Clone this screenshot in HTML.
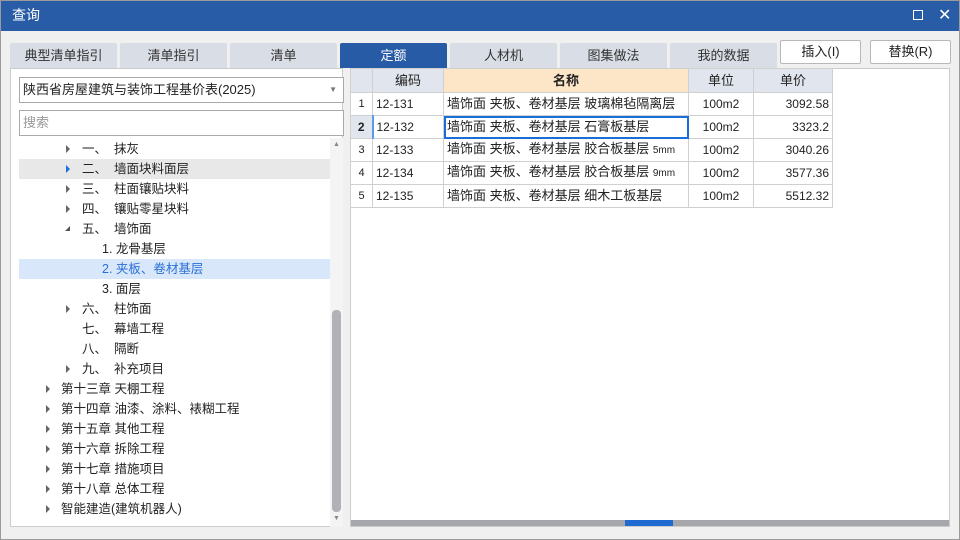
<!DOCTYPE html><html><head><meta charset="utf-8"><style>
*{box-sizing:border-box;margin:0;padding:0}
body{width:960px;height:540px;background:#f0f0f0;font-family:"Liberation Sans","Noto Sans CJK SC",sans-serif;font-size:12px;color:#222;position:relative;overflow:hidden}
.a{position:absolute}
.title{left:0;top:0;width:960px;height:31px;background:#285ca6;color:#fff;font-size:14px;line-height:31px;padding-left:12px}
.tab{top:43px;height:25px;width:107px;background:#d8dde6;border-radius:2px 2px 0 0;text-align:center;line-height:25px;font-size:13px;color:#333}
.tab.on{background:#275ba6;color:#fff}
.btn{top:40px;height:24px;width:81px;background:#fff;border:1px solid #b8b8b8;border-radius:2px;text-align:center;line-height:22px;font-size:13px}
.left{left:10px;top:68px;width:333px;height:459px;background:#fff;border:1px solid #ccc}
.inp{left:19px;width:325px;height:26px;border:1px solid #aaa;background:#fff;line-height:24px;padding-left:3px;font-size:13px}
.row{left:19px;width:311px;height:20px;line-height:20px;font-size:12.5px}
.tri{position:absolute;width:0;height:0;border-top:4px solid transparent;border-bottom:4px solid transparent;border-left:4px solid #666;top:6px}
table{border-collapse:collapse;position:absolute;left:350px;top:68px;font-size:12px;table-layout:fixed}
td{border:1px solid #d0d0d0;height:23px;line-height:20px;padding:0 3px;white-space:nowrap;overflow:hidden}
th{border:1px solid #d0d0d0;height:24px;line-height:20px;background:#e1e6ee;font-weight:normal;font-size:13px}
</style></head><body>
<div class="a title">查询</div>
<div class="a" style="left:913px;top:10px;width:10px;height:10px;border:1px solid #fff"></div>
<div class="a" style="left:938px;top:5px;color:#fff;font-size:16px">✕</div>
<div class="a tab" style="left:10px">典型清单指引</div>
<div class="a tab" style="left:120px">清单指引</div>
<div class="a tab" style="left:230px">清单</div>
<div class="a tab on" style="left:340px">定额</div>
<div class="a tab" style="left:450px">人材机</div>
<div class="a tab" style="left:560px">图集做法</div>
<div class="a tab" style="left:670px">我的数据</div>
<div class="a btn" style="left:780px">插入(I)</div>
<div class="a btn" style="left:870px">替换(R)</div>
<div class="a left"></div>
<div class="a inp" style="top:77px">陕西省房屋建筑与装饰工程基价表(2025)<span style="position:absolute;right:6px;top:0;color:#777;font-size:8px">▼</span></div>
<div class="a inp" style="top:110px;color:#999">搜索</div>
<div class="a" style="left:330px;top:138px;width:13px;height:389px;background:#f4f4f4"></div>
<div class="a" style="left:332px;top:310px;width:9px;height:202px;background:#b0b2b6;border-radius:4px"></div>
<div class="a" style="left:333px;top:141px;color:#888;font-size:7px">▲</div>
<div class="a" style="left:333px;top:515px;color:#888;font-size:7px">▼</div>
<div class="a row" style="top:139px"><i class="tri" style="left:47px"></i><span style="position:absolute;left:63px">一、&nbsp; 抹灰</span></div>
<div class="a row" style="top:159px;background:#e8e8e8"><i class="tri" style="left:47px;border-left-color:#1a6fe0"></i><span style="position:absolute;left:63px">二、&nbsp; 墙面块料面层</span></div>
<div class="a row" style="top:179px"><i class="tri" style="left:47px"></i><span style="position:absolute;left:63px">三、&nbsp; 柱面镶贴块料</span></div>
<div class="a row" style="top:199px"><i class="tri" style="left:47px"></i><span style="position:absolute;left:63px">四、&nbsp; 镶贴零星块料</span></div>
<div class="a row" style="top:219px"><i class="a" style="left:46px;top:7px;width:0;height:0;border-left:5px solid transparent;border-bottom:5px solid #555"></i><span style="position:absolute;left:63px">五、&nbsp; 墙饰面</span></div>
<div class="a row" style="top:239px"><span style="position:absolute;left:83px">1. 龙骨基层</span></div>
<div class="a row" style="top:259px;background:#d9e7fb;color:#2a6fd6"><span style="position:absolute;left:83px">2. 夹板、卷材基层</span></div>
<div class="a row" style="top:279px"><span style="position:absolute;left:83px">3. 面层</span></div>
<div class="a row" style="top:299px"><i class="tri" style="left:47px"></i><span style="position:absolute;left:63px">六、&nbsp; 柱饰面</span></div>
<div class="a row" style="top:319px"><span style="position:absolute;left:63px">七、&nbsp; 幕墙工程</span></div>
<div class="a row" style="top:339px"><span style="position:absolute;left:63px">八、&nbsp; 隔断</span></div>
<div class="a row" style="top:359px"><i class="tri" style="left:47px"></i><span style="position:absolute;left:63px">九、&nbsp; 补充项目</span></div>
<div class="a row" style="top:379px"><i class="tri" style="left:27px"></i><span style="position:absolute;left:42px">第十三章 天棚工程</span></div>
<div class="a row" style="top:399px"><i class="tri" style="left:27px"></i><span style="position:absolute;left:42px">第十四章 油漆、涂料、裱糊工程</span></div>
<div class="a row" style="top:419px"><i class="tri" style="left:27px"></i><span style="position:absolute;left:42px">第十五章 其他工程</span></div>
<div class="a row" style="top:439px"><i class="tri" style="left:27px"></i><span style="position:absolute;left:42px">第十六章 拆除工程</span></div>
<div class="a row" style="top:459px"><i class="tri" style="left:27px"></i><span style="position:absolute;left:42px">第十七章 措施项目</span></div>
<div class="a row" style="top:479px"><i class="tri" style="left:27px"></i><span style="position:absolute;left:42px">第十八章 总体工程</span></div>
<div class="a row" style="top:499px"><i class="tri" style="left:27px"></i><span style="position:absolute;left:42px">智能建造(建筑机器人)</span></div>
<div class="a" style="left:350px;top:68px;width:600px;height:459px;background:#fff;border:1px solid #ccc"></div>
<table>
<colgroup><col style="width:22px"><col style="width:71px"><col style="width:245px"><col style="width:65px"><col style="width:79px"></colgroup>
<tr><th></th><th>编码</th><th style="background:#fde5c8;font-weight:bold">名称</th><th>单位</th><th>单价</th></tr>
<tr><td style="text-align:center;font-size:11px">1</td><td>12-131</td><td style="font-size:13px">墙饰面 夹板、卷材基层 玻璃棉毡隔离层</td><td style="text-align:center">100m2</td><td style="text-align:right">3092.58</td></tr>
<tr><td style="background:#e1e6ee;text-align:center;font-weight:bold;border-right:2px solid #5b9be8">2</td><td>12-132</td><td style="font-size:13px;outline:2px solid #1a6fd6;outline-offset:-2px">墙饰面 夹板、卷材基层 石膏板基层</td><td style="text-align:center">100m2</td><td style="text-align:right">3323.2</td></tr>
<tr><td style="text-align:center;font-size:11px">3</td><td>12-133</td><td style="font-size:13px">墙饰面 夹板、卷材基层 胶合板基层 <span style="font-size:10px">5mm</span></td><td style="text-align:center">100m2</td><td style="text-align:right">3040.26</td></tr>
<tr><td style="text-align:center;font-size:11px">4</td><td>12-134</td><td style="font-size:13px">墙饰面 夹板、卷材基层 胶合板基层 <span style="font-size:10px">9mm</span></td><td style="text-align:center">100m2</td><td style="text-align:right">3577.36</td></tr>
<tr><td style="text-align:center;font-size:11px">5</td><td>12-135</td><td style="font-size:13px">墙饰面 夹板、卷材基层 细木工板基层</td><td style="text-align:center">100m2</td><td style="text-align:right">5512.32</td></tr>
</table>
<div class="a" style="left:351px;top:520px;width:598px;height:6px;background:#a5a7ab"></div>
<div class="a" style="left:625px;top:520px;width:48px;height:6px;background:#1e6ad0"></div>
<div class="a" style="left:0;top:0;width:960px;height:540px;border:1px solid #9a9a9a;pointer-events:none"></div>
</body></html>
